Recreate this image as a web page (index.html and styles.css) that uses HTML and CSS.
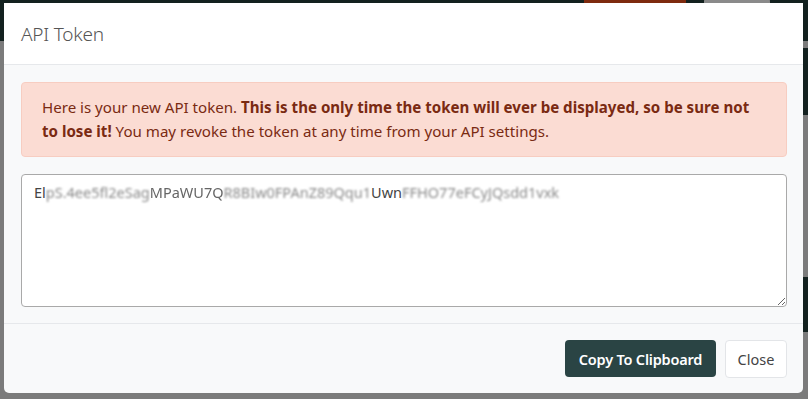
FILE: index.html
```html
<!DOCTYPE html>
<html lang="en">
<head>
  <meta charset="UTF-8">
  <title>API Token</title>
  <link rel="stylesheet" href="styles.css">
</head>
<body>
  <!-- dimmed page behind the dialog -->
  <div class="page">
    <div class="topbar">
      <span class="topbar-btn"></span>
      <span class="topbar-avatar"></span>
    </div>
    <div class="page-edge">
      <span class="edge-gray small"></span>
      <span class="edge-dark tall"></span>
      <span class="edge-gray mid"></span>
      <span class="edge-dark short"></span>
    </div>
  </div>

  <div class="modal">
    <div class="modal-header">
      <h5 class="modal-title">API Token</h5>
    </div>
    <div class="modal-body">
      <div class="alert">
        Here is your new API token. <strong>This is the only time the token will ever be displayed, so be sure not to lose it!</strong> You may revoke the token at any time from your API settings.
      </div>
      <div class="token-box">El<span class="blur">pS.4ee5fl2eSag</span><span class="soft">MPaWU7Q</span><span class="blur">R8BIw0FPAnZ89Qqu1</span>Uwn<span class="blur">FFHO77eFCyJQsdd1vxk</span></div>
    </div>
    <div class="modal-footer">
      <button class="btn btn-primary">Copy To Clipboard</button>
      <button class="btn btn-light">Close</button>
    </div>
  </div>
</body>
</html>
```

FILE: styles.css
```css
body {
  margin: 0;
  background-color: #7b7b7b;
  font-family: "Noto Sans", "Open Sans", Arial, sans-serif;
  width: 808px;
  height: 399px;
  overflow: hidden;
  position: relative;
}

/* page behind the overlay */
.topbar {
  height: 41px;
  background: #13211f;
  position: relative;
}
.topbar-btn {
  position: absolute;
  left: 584px;
  top: 0;
  width: 102px;
  height: 8px;
  background: #7e2a0e;
}
.topbar-avatar {
  position: absolute;
  left: 704px;
  top: -30px;
  width: 66px;
  height: 66px;
  border-radius: 50%;
  background: #8a8a8a;
}
.page-edge {
  position: absolute;
  right: 0;
  top: 41px;
  width: 5px;
  display: flex;
  flex-direction: column;
}
.edge-gray { background: #7b7b7b; }
.edge-dark { background: #13211f; }
.small { height: 7px; }
.tall { height: 67px; }
.mid { height: 162px; }
.short { height: 55px; }

/* dialog */
.modal {
  position: absolute;
  left: 4px;
  top: 3px;
  width: 799px;
  height: 390px;
  background: #f8f9fa;
  border-radius: 0 0 5px 5px;
  display: flex;
  flex-direction: column;
  overflow: hidden;
}
.modal-header {
  height: 61px;
  background: #fff;
  border-bottom: 1px solid #e6e8eb;
  display: flex;
  align-items: center;
  padding: 0 17px;
}
.modal-title {
  margin: 0;
  font-size: 19px;
  font-weight: 300;
  color: #555;
  letter-spacing: -0.2px;
}
.modal-body {
  padding: 17px 16px 16px 17px;
  border-bottom: 1px solid #e6e8eb;
}
.alert {
  background: #fbdcd3;
  border: 1px solid #f7cdc1;
  border-radius: 4px;
  color: #7a2a12;
  font-size: 15.1px;
  line-height: 24px;
  padding: 12px 30px 13px 20px;
}
.alert strong {
  font-weight: 700;
}
.token-box {
  margin-top: 17px;
  height: 119px;
  background: #fff;
  border: 1px solid #a9a9a9;
  border-radius: 4px;
  padding: 6px 12px;
  font-size: 14.5px;
  line-height: 22px;
  color: #444;
  resize: vertical;
  overflow: auto;
  white-space: nowrap;
}
.blur {
  color: #8a8a8a;
  filter: blur(0.9px);
}
.soft {
  color: #666;
  filter: blur(0.5px);
}
.modal-footer {
  flex: 1;
  display: flex;
  align-items: center;
  justify-content: flex-end;
  gap: 9px;
  padding: 0 16px 0 0;
}
.btn {
  font-family: inherit;
  font-size: 14.5px;
  height: 37px;
  border-radius: 4px;
  cursor: pointer;
}
.btn-primary {
  background: #2a4444;
  color: #fff;
  border: none;
  font-weight: 600;
  padding: 0 13px;
  width: 151px;
  letter-spacing: -0.2px;
}
.btn-light {
  background: #fff;
  color: #444;
  border: 1px solid #e3e5e8;
  font-weight: 400;
  width: 62px;
  height: 38px;
}
```
